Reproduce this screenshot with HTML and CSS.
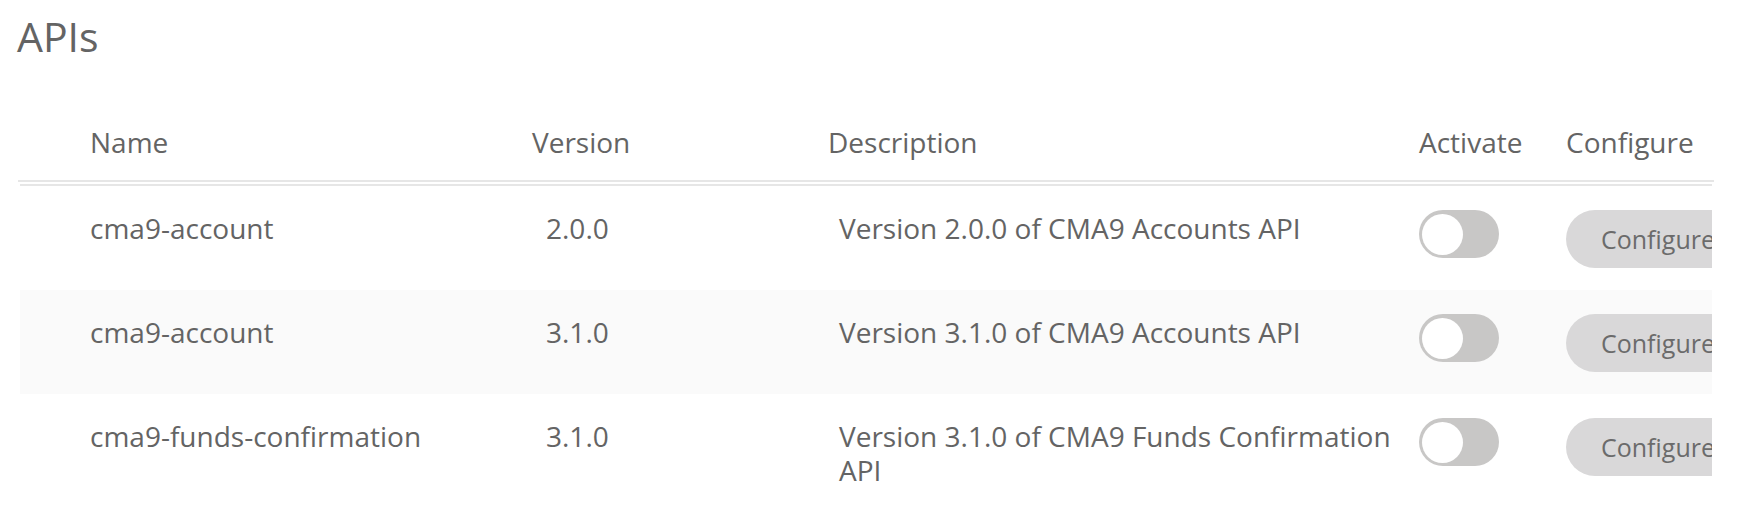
FILE: index.html
```html
<!DOCTYPE html>
<html lang="en">
<head>
<meta charset="utf-8">
<title>APIs</title>
<link rel="stylesheet" href="styles.css">
</head>
<body>
<main class="page">
  <h1 class="title">APIs</h1>
  <div class="table">
    <div class="thead">
      <div class="row head-row">
        <div class="cell spacer"></div>
        <div class="cell th">Name</div>
        <div class="cell th">Version</div>
        <div class="cell th">Description</div>
        <div class="cell th">Activate</div>
        <div class="cell th">Configure</div>
      </div>
    </div>
    <div class="tbody">
      <div class="row body-row">
        <div class="cell spacer"></div>
        <div class="cell td name">cma9-account</div>
        <div class="cell td version">2.0.0</div>
        <div class="cell td desc">Version 2.0.0 of CMA9 Accounts API</div>
        <div class="cell td act"><span class="toggle"><span class="knob"></span></span></div>
        <div class="cell td conf"><button class="btn">Configure</button></div>
      </div>
      <div class="row body-row striped">
        <div class="cell spacer"></div>
        <div class="cell td name">cma9-account</div>
        <div class="cell td version">3.1.0</div>
        <div class="cell td desc">Version 3.1.0 of CMA9 Accounts API</div>
        <div class="cell td act"><span class="toggle"><span class="knob"></span></span></div>
        <div class="cell td conf"><button class="btn">Configure</button></div>
      </div>
      <div class="row body-row">
        <div class="cell spacer"></div>
        <div class="cell td name">cma9-funds-confirmation</div>
        <div class="cell td version">3.1.0</div>
        <div class="cell td desc">Version 3.1.0 of CMA9 Funds Confirmation API</div>
        <div class="cell td act"><span class="toggle"><span class="knob"></span></span></div>
        <div class="cell td conf"><button class="btn">Configure</button></div>
      </div>
    </div>
  </div>
</main>
</body>
</html>
```

FILE: styles.css
```css
html, body {
  margin: 0;
  padding: 0;
  background: #ffffff;
}

body {
  font-family: "Open Sans", "Noto Sans", sans-serif;
  color: #646464;
  width: 1738px;
  height: 506px;
  overflow: hidden;
}

.page {
  padding: 0 26px 0 20px;
}

.title {
  margin: 12px 0 50px -3px;
  font-size: 41px;
  line-height: 48px;
  font-weight: 400;
  color: #646464;
}

.row {
  display: grid;
  grid-template-columns: 70px 442px 296px 591px 147px max-content;
}

.thead {
  margin: 0 -2px;
  padding: 0 2px;
  border-bottom: 2px solid #e6e6e6;
}

.th {
  font-size: 28px;
  line-height: 34px;
  padding: 15px 0 21px;
}

.tbody {
  margin-top: 2px;
  border-top: 2px solid #e6e6e6;
  overflow: hidden;
}

.body-row {
  height: 104px;
  box-sizing: border-box;
}

.striped {
  background: #fafafa;
}

.td {
  font-size: 28px;
  line-height: 34px;
  padding-top: 25px;
}

.version {
  padding-left: 14px;
}

.desc {
  padding-left: 11px;
  padding-right: 10px;
}

.act,
.conf {
  padding-top: 24px;
}

.toggle {
  display: flex;
  align-items: center;
  width: 80px;
  height: 48px;
  padding: 0 3px;
  box-sizing: border-box;
  border-radius: 24px;
  background: #c8c7c6;
}

.knob {
  width: 41px;
  height: 41px;
  border-radius: 50%;
  background: #ffffff;
}

.btn {
  display: block;
  height: 58px;
  padding: 0 35px;
  border: 0;
  border-radius: 29px;
  background: #d9d8d9;
  color: #6b6b6b;
  font-family: inherit;
  font-size: 25px;
  line-height: 34px;
  white-space: nowrap;
}
```
